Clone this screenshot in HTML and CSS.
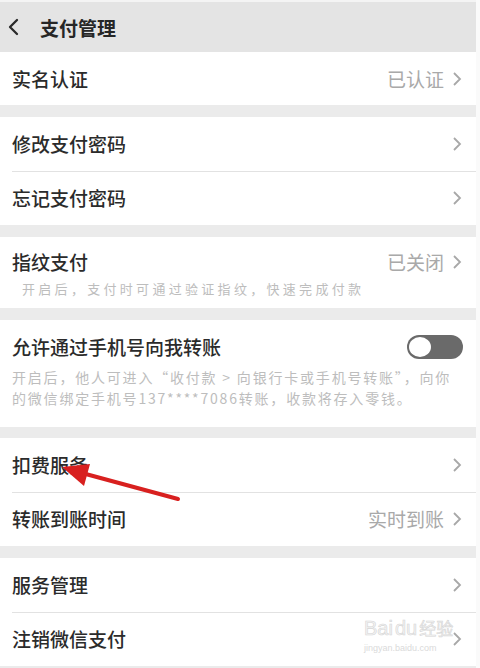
FILE: index.html
```html
<!DOCTYPE html>
<html lang="zh-CN">
<head>
<meta charset="utf-8">
<title>支付管理</title>
<link rel="stylesheet" href="styles.css">
</head>
<body>
<div class="page">
  <header class="topbar">
    <svg class="back" width="14" height="18" viewBox="0 0 14 18"><path d="M10 2 L3 9 L10 16" fill="none" stroke="#2a2a2a" stroke-width="2.3" stroke-linecap="round" stroke-linejoin="round"/></svg>
    <h1 class="title">支付管理</h1>
  </header>

  <section class="group">
    <div class="row">
      <span class="label">实名认证</span>
      <span class="extra"><span class="value">已认证</span><svg class="chev" width="10" height="16" viewBox="0 0 10 16"><path d="M2 2 L8 8 L2 14" fill="none" stroke="#a8a8a8" stroke-width="1.8"/></svg></span>
    </div>
  </section>

  <section class="group">
    <div class="row">
      <span class="label">修改支付密码</span>
      <span class="extra"><svg class="chev" width="10" height="16" viewBox="0 0 10 16"><path d="M2 2 L8 8 L2 14" fill="none" stroke="#a8a8a8" stroke-width="1.8"/></svg></span>
    </div>
    <div class="row">
      <span class="label">忘记支付密码</span>
      <span class="extra"><svg class="chev" width="10" height="16" viewBox="0 0 10 16"><path d="M2 2 L8 8 L2 14" fill="none" stroke="#a8a8a8" stroke-width="1.8"/></svg></span>
    </div>
  </section>

  <section class="group">
    <div class="block finger">
      <div class="block-head">
        <span class="label">指纹支付</span>
        <span class="extra"><span class="value">已关闭</span><svg class="chev" width="10" height="16" viewBox="0 0 10 16"><path d="M2 2 L8 8 L2 14" fill="none" stroke="#a8a8a8" stroke-width="1.8"/></svg></span>
      </div>
      <p class="sub">开启后，支付时可通过验证指纹，快速完成付款</p>
    </div>
  </section>

  <section class="group">
    <div class="block phone">
      <div class="block-head">
        <span class="label">允许通过手机号向我转账</span>
        <span class="toggle"><span class="knob"></span></span>
      </div>
      <p class="desc">开启后，他人可进入“收付款 &gt; 向银行卡或手机号转账”，向你<br>的微信绑定手机号137****7086转账，收款将存入零钱。</p>
    </div>
  </section>

  <section class="group g-short">
    <div class="row">
      <span class="label">扣费服务</span>
      <span class="extra"><svg class="chev" width="10" height="16" viewBox="0 0 10 16"><path d="M2 2 L8 8 L2 14" fill="none" stroke="#a8a8a8" stroke-width="1.8"/></svg></span>
    </div>
    <div class="row">
      <span class="label">转账到账时间</span>
      <span class="extra"><span class="value">实时到账</span><svg class="chev" width="10" height="16" viewBox="0 0 10 16"><path d="M2 2 L8 8 L2 14" fill="none" stroke="#a8a8a8" stroke-width="1.8"/></svg></span>
    </div>
  </section>

  <section class="group">
    <div class="row">
      <span class="label">服务管理</span>
      <span class="extra"><svg class="chev" width="10" height="16" viewBox="0 0 10 16"><path d="M2 2 L8 8 L2 14" fill="none" stroke="#a8a8a8" stroke-width="1.8"/></svg></span>
    </div>
    <div class="row">
      <span class="label">注销微信支付</span>
      <span class="extra"><svg class="chev" width="10" height="16" viewBox="0 0 10 16"><path d="M2 2 L8 8 L2 14" fill="none" stroke="#a8a8a8" stroke-width="1.8"/></svg></span>
    </div>
  </section>

  <svg class="arrow" width="480" height="668" viewBox="0 0 480 668">
    <line x1="178" y1="499" x2="82" y2="473" stroke="#d8201f" stroke-width="4" stroke-linecap="round"/>
    <polygon points="62,467 90,464 84,486" fill="#d8201f"/>
  </svg>

  <div class="watermark">
    <div class="wm-main"><span>Bai</span><span class="paw">du</span><span class="wm-cn">经验</span></div>
    <div class="wm-url">jingyan.baidu.com</div>
  </div>
</div>
</body>
</html>
```

FILE: styles.css
```css
* { box-sizing: border-box; }
html, body { margin: 0; padding: 0; }
body {
  background: #fafafa;
  font-family: "Noto Sans CJK SC", "Noto Sans", sans-serif;
  color: #2e2e2e;
}
.page {
  position: relative;
  width: 476px;
  height: 668px;
  overflow: hidden;
  background: #ebebeb;
  border-top: 2px solid #f4f4f4;
}
.topbar {
  height: 50px;
  background: #e4e4e4;
  display: flex;
  align-items: center;
  padding-left: 7px;
  gap: 19px;
}
.back { display: block; margin-top: -1px; }
.title {
  margin: 0;
  font-size: 19px;
  font-weight: 700;
  color: #262626;
  line-height: 1;
}
.group {
  background: #fff;
  margin-bottom: 12px;
}
.g-short { margin-top: -1px; }
.row {
  height: 54px;
  display: flex;
  align-items: center;
  justify-content: space-between;
  padding: 0 14px 0 12px;
}
.group:first-of-type .row { height: 53px; }
.row + .row {
  background: linear-gradient(#e2e2e2, #e2e2e2) 12px 0 / calc(100% - 12px) 1px no-repeat;
}
.label {
  font-size: 19px;
  font-weight: 500;
  color: #2b2b2b;
  line-height: 26px;
}
.extra {
  display: flex;
  align-items: center;
  gap: 8px;
}
.value {
  font-size: 19px;
  color: #a9a9a9;
  line-height: 26px;
}
.chev { display: block; }
.block { padding: 12px 14px 0 12px; }
.block-head {
  display: flex;
  align-items: center;
  justify-content: space-between;
}
.finger { height: 71px; }
.sub {
  margin: 4px 0 0 10px;
  font-size: 13px;
  letter-spacing: 3.3px;
  color: #bdbdbd;
  line-height: 20px;
  white-space: nowrap;
}
.phone { height: 107px; padding-top: 14px; padding-right: 13px; }
.toggle {
  width: 56px;
  height: 24px;
  border-radius: 12px;
  background: #6a6a6a;
  display: flex;
  align-items: center;
  padding-left: 2px;
}
.knob {
  width: 22px;
  height: 20px;
  border-radius: 50%;
  background: #fff;
}
.desc {
  margin: 7px 0 0 0;
  font-size: 14px;
  letter-spacing: 1.8px;
  color: #bdbdbd;
  line-height: 21px;
  white-space: nowrap;
}
.arrow {
  position: absolute;
  left: 0;
  top: -2px;
  pointer-events: none;
}
.watermark {
  position: absolute;
  left: 364px;
  top: 614px;
  color: #e2e2e2;
  font-family: "Liberation Sans", sans-serif;
  pointer-events: none;
}
.wm-main {
  font-size: 20px;
  line-height: 24px;
  display: flex;
  align-items: center;
  gap: 2px;
  -webkit-text-stroke: 0.6px #d6d6d6;
  color: #f4f4f4;
}
.wm-cn {
  font-family: "Noto Sans CJK SC", sans-serif;
  font-size: 17px;
}
.wm-url {
  font-size: 9px;
  line-height: 12px;
  color: #dadada;
  margin-top: 2px;
}
```
